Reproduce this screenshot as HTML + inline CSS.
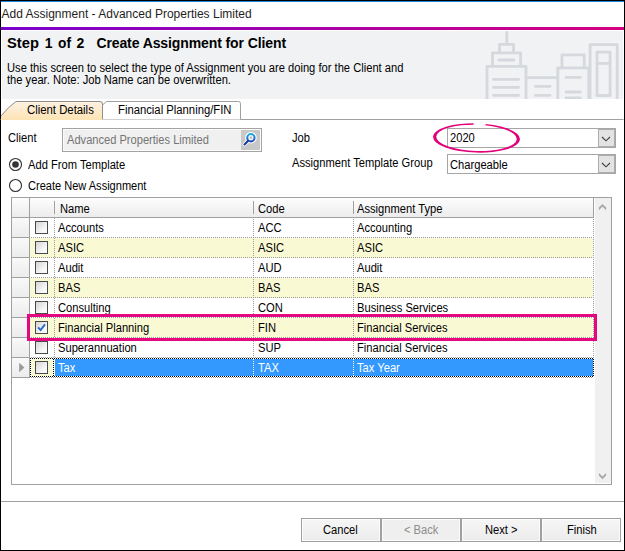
<!DOCTYPE html><html><head><meta charset="utf-8"><style>
*{margin:0;padding:0;box-sizing:border-box}
html,body{width:625px;height:551px;overflow:hidden;background:#fff}
body{position:relative;font-family:"Liberation Sans",sans-serif;color:#000}
body>div{position:absolute}
.t{white-space:nowrap;line-height:13px;font-size:11px}
svg{position:absolute;left:0;top:0}
</style></head><body>
<div style="left:0px;top:0px;width:625px;height:1px;background:#000"></div>
<div style="left:0px;top:0px;width:1px;height:551px;background:#000"></div>
<div style="left:624px;top:0px;width:1px;height:551px;background:#000"></div>
<div style="left:0px;top:550px;width:625px;height:1px;background:#000"></div>
<div style="left:1px;top:1px;width:623px;height:1px;background:#1784d8"></div>
<div class="t" style="left:1.5px;top:8px;font-size:12px;color:#1e1e1e">Add Assignment - Advanced Properties Limited</div>
<div style="left:1px;top:27px;width:623px;height:3px;background:linear-gradient(90deg,#7a00cc 0%,#a800aa 50%,#d6007f 100%)"></div>
<div style="left:2px;top:31px;width:621px;height:68px;background:#f1f2f4"></div>
<div class="t" style="left:6.9px;top:35px;font-size:14px;line-height:16px;font-weight:bold;letter-spacing:0px;transform:scaleX(1.05);transform-origin:0 0">Step</div>
<div class="t" style="left:44.8px;top:35px;font-size:14px;line-height:16px;font-weight:bold;letter-spacing:0px;transform:scaleX(1);transform-origin:0 0">1</div>
<div class="t" style="left:57.5px;top:35px;font-size:14px;line-height:16px;font-weight:bold;letter-spacing:0px;transform:scaleX(0.98);transform-origin:0 0">of</div>
<div class="t" style="left:76.5px;top:35px;font-size:14px;line-height:16px;font-weight:bold;letter-spacing:0px;transform:scaleX(1);transform-origin:0 0">2</div>
<div class="t" style="left:96.4px;top:35px;font-size:14px;line-height:16px;font-weight:bold;letter-spacing:-0.1px;transform:scaleX(1);transform-origin:0 0">Create Assignment for Client</div>
<div class="t" style="left:6.9px;top:61px;font-size:12px;line-height:14px;transform:scaleX(0.93);transform-origin:0 0;">Use this screen to select the type of Assignment you are doing for the Client and</div>
<div class="t" style="left:6.9px;top:73px;font-size:12px;line-height:14px;transform:scaleX(0.93);transform-origin:0 0;">the year. Note: Job Name can be overwritten.</div>
<div style="left:2px;top:31px;width:621px;height:68px;overflow:hidden"><div style="position:absolute;left:-2px;top:-31px"><svg width="625" height="99" viewBox="0 0 625 99" style="left:0;top:0">
<g fill="none" stroke="#d5d8dc" stroke-width="2.8" stroke-linecap="round" stroke-linejoin="round">
<path d="M506.8 32.5V44.3"/>
<path d="M499.5 52.5V44.3H513.6V52.5"/>
<path d="M492.5 65.5V52.8H520.6V65.5"/>
<path d="M498.8 60H514"/>
<path d="M487 100V66.3H526V100"/>
<path d="M493.5 79.3H518.6M493.5 87.3H518.6M493.5 95.3H518.6"/>
<path d="M526 77.7H557.8"/>
<path d="M535.5 86.4H550M535.5 95.3H550"/>
<path d="M557.8 100V67.9H588.8V100"/>
<path d="M561.9 67.9V54.8H584.2V67.9"/>
<path d="M566 77.4H580.3M566 92H580.3M566 98H580.3"/>
<path d="M590.1 100V44.7H617.2V100"/>
<path d="M597 95.5V52.2H610.1V95.5H597M597 63.3H610.1"/>
</g></svg></div></div>
<div style="left:0;top:0;width:625px;height:130px"><svg width="625" height="130" style="left:0;top:0">
<path d="M0.5 119.5H623.5" stroke="#a0a0a0" stroke-width="1" fill="none"/>
<path d="M102.5 119.5V105L106.5 101.5H238.5Q240.5 101.5 240.5 103.5V119.5" fill="#fff" stroke="#a0a0a0" stroke-width="1"/>
<defs><linearGradient id="pg" x1="0" y1="0" x2="0" y2="1"><stop offset="0" stop-color="#fef2e3"/><stop offset="1" stop-color="#fde3b4"/></linearGradient></defs>
<path d="M1 120V116Q8 107 16 101.5H100Q102.5 101.5 102.5 104V120Z" fill="url(#pg)"/>
<path d="M1 116Q8 107 16 101.5H100Q102.5 101.5 102.5 104V119" fill="none" stroke="#8f8f8f" stroke-width="1"/>
</svg></div>
<div class="t" style="left:27.2px;top:103px;font-size:12px;line-height:14px;transform:scaleX(0.945);transform-origin:0 0;">Client Details</div>
<div class="t" style="left:117.9px;top:103px;font-size:12px;line-height:14px;transform:scaleX(0.94);transform-origin:0 0;">Financial Planning/FIN</div>
<div class="t" style="left:8.3px;top:131px;font-size:12px;line-height:14px;transform:scaleX(0.93);transform-origin:0 0;">Client</div>
<div style="left:62px;top:128px;width:200px;height:24px;border:1px solid #a3a3a3;background:#f0f0f0;box-shadow:inset 0 0 0 1px #fcfcfc"></div>
<div class="t" style="left:66.9px;top:133px;font-size:12px;line-height:14px;transform:scaleX(0.925);transform-origin:0 0;color:#747474">Advanced Properties Limited</div>
<div style="left:241px;top:130px;width:19px;height:20px;background:#c8c8c8"></div>
<div style="left:241px;top:130px;width:19px;height:20px"><svg width="19" height="20" viewBox="0 0 19 20" style="left:0;top:0">
<defs><linearGradient id="sg" x1="0" y1="0" x2="0" y2="1"><stop offset="0" stop-color="#1faee6"/><stop offset="1" stop-color="#2046c4"/></linearGradient></defs>
<path d="M3.4 14.5L7.2 10.7" stroke="#fff" stroke-width="3.8" stroke-linecap="round"/>
<circle cx="9.9" cy="7.7" r="3.7" fill="none" stroke="#fff" stroke-width="4.2"/>
<circle cx="9.9" cy="7.7" r="3.65" fill="none" stroke="url(#sg)" stroke-width="2.1"/>
<path d="M3.5 14.4L6.9 11" stroke="#1a3a92" stroke-width="2.1" stroke-linecap="round"/>
</svg></div>
<div class="t" style="left:292.2px;top:131px;font-size:12px;line-height:14px;transform:scaleX(0.93);transform-origin:0 0;">Job</div>
<div class="t" style="left:292.2px;top:156px;font-size:12px;line-height:14px;transform:scaleX(0.93);transform-origin:0 0;">Assignment Template Group</div>
<div style="left:447px;top:128px;width:169px;height:20px;border:1px solid #a6a6a6;background:#fff"></div>
<div style="left:598px;top:129px;width:17px;height:18px;border:1px solid #adadad;background:#e3e3e3"></div>
<svg width="12" height="8" style="left:600px;top:136px"><path d="M2 1L6 4.8L10 1" fill="none" stroke="#404040" stroke-width="1.15"/></svg>
<div class="t" style="left:450px;top:131px;font-size:12px;line-height:14px;transform:scaleX(0.93);transform-origin:0 0;">2020</div>
<div style="left:447px;top:154px;width:169px;height:20px;border:1px solid #a6a6a6;background:#fff"></div>
<div style="left:598px;top:155px;width:17px;height:18px;border:1px solid #adadad;background:#e3e3e3"></div>
<svg width="12" height="8" style="left:600px;top:162px"><path d="M2 1L6 4.8L10 1" fill="none" stroke="#404040" stroke-width="1.15"/></svg>
<div class="t" style="left:450px;top:158px;font-size:12px;line-height:14px;transform:scaleX(0.93);transform-origin:0 0;">Chargeable</div>
<svg width="17" height="17" style="left:7px;top:156px"><circle cx="8.5" cy="8.5" r="6" fill="#fff" stroke="#333" stroke-width="1.1"/><circle cx="8.5" cy="8.5" r="3.3" fill="#333"/></svg>
<svg width="17" height="17" style="left:7px;top:177px"><circle cx="8.5" cy="8.5" r="6" fill="#fff" stroke="#333" stroke-width="1.1"/></svg>
<div class="t" style="left:28.4px;top:158px;font-size:12px;line-height:14px;transform:scaleX(0.93);transform-origin:0 0;">Add From Template</div>
<div class="t" style="left:28.1px;top:179px;font-size:12px;line-height:14px;transform:scaleX(0.92);transform-origin:0 0;">Create New Assignment</div>
<svg width="625" height="200" style="left:0;top:0"><g transform="rotate(1.7 476.5 138)">
<path fill="#e2007c" fill-rule="evenodd" d="M433 138a43.5 14.6 0 1 0 87 0a43.5 14.6 0 1 0 -87 0Z M436.2 137.9a40.3 13.1 0 1 0 80.6 0a40.3 13.1 0 1 0 -80.6 0Z"/>
</g><rect x="473.6" y="120.5" width="12" height="5" fill="#fff"/></svg>
<div style="left:11px;top:197px;width:601px;height:288px;border:1px solid #a0a0a0;background:#fff"></div>
<div style="left:12px;top:198px;width:582px;height:19px;background:linear-gradient(#fdfdfd,#ececec)"></div>
<div style="left:12px;top:217px;width:582px;height:1px;background:#a0a0a0"></div>
<div style="left:29px;top:198px;width:1px;height:20px;background:#a0a0a0"></div>
<div style="left:593px;top:198px;width:1px;height:20px;background:#a0a0a0"></div>
<div style="left:54px;top:201px;width:1px;height:13px;background:#a0a0a0"></div>
<div style="left:253px;top:201px;width:1px;height:13px;background:#a0a0a0"></div>
<div style="left:353px;top:201px;width:1px;height:13px;background:#a0a0a0"></div>
<div class="t" style="left:59.5px;top:202px;font-size:12px;line-height:14px;transform:scaleX(0.93);transform-origin:0 0;">Name</div>
<div class="t" style="left:258px;top:202px;font-size:12px;line-height:14px;transform:scaleX(0.93);transform-origin:0 0;">Code</div>
<div class="t" style="left:357.4px;top:202px;font-size:12px;line-height:14px;transform:scaleX(0.93);transform-origin:0 0;">Assignment Type</div>
<div style="left:595px;top:198px;width:16px;height:285px;background:#f0f0f0"></div>
<svg width="12" height="10" style="left:597px;top:201px"><path d="M1.9 6.6L5.5 3L9.1 6.6L9.1 9.2L5.5 5.6L1.9 9.2Z" fill="#a6a6a6" stroke="none"/></svg>
<svg width="12" height="10" style="left:597px;top:471px"><path d="M1.9 2L5.5 5.6L9.1 2L9.1 4.6L5.5 8.2L1.9 4.6Z" fill="#a6a6a6" stroke="none"/></svg>
<div style="left:12px;top:218px;width:17px;height:19px;background:linear-gradient(#f9f9f9,#ececec)"></div>
<div style="left:12px;top:237px;width:18px;height:1px;background:#a0a0a0"></div>
<div style="left:29px;top:218px;width:1px;height:20px;background:#a0a0a0"></div>
<div style="left:30px;top:218px;width:563px;height:20px;background:#ffffff"></div>
<div style="left:31px;top:237px;width:562px;height:1px;background:repeating-linear-gradient(90deg,#9a9a9a 0 1px,transparent 1px 2px)"></div>
<div style="left:54px;top:218px;width:1px;height:20px;background:repeating-linear-gradient(180deg,#9a9a9a 0 1px,transparent 1px 2px)"></div>
<div style="left:253px;top:219px;width:1px;height:19px;background:repeating-linear-gradient(180deg,#9a9a9a 0 1px,transparent 1px 2px)"></div>
<div style="left:353px;top:219px;width:1px;height:19px;background:repeating-linear-gradient(180deg,#9a9a9a 0 1px,transparent 1px 2px)"></div>
<div style="left:593px;top:219px;width:1px;height:19px;background:repeating-linear-gradient(180deg,#9a9a9a 0 1px,transparent 1px 2px)"></div>
<div style="left:35px;top:221px;width:13px;height:13px;border:1px solid #4a4a4a;background:linear-gradient(135deg,#d4d4d4,#f8f8f8 70%)"></div>
<div class="t" style="left:58.4px;top:221px;font-size:12px;line-height:14px;transform:scaleX(0.93);transform-origin:0 0;color:#000">Accounts</div>
<div class="t" style="left:257.5px;top:221px;font-size:12px;line-height:14px;transform:scaleX(0.93);transform-origin:0 0;color:#000">ACC</div>
<div class="t" style="left:357.4px;top:221px;font-size:12px;line-height:14px;transform:scaleX(0.93);transform-origin:0 0;color:#000">Accounting</div>
<div style="left:12px;top:238px;width:17px;height:19px;background:linear-gradient(#f9f9f9,#ececec)"></div>
<div style="left:12px;top:257px;width:18px;height:1px;background:#a0a0a0"></div>
<div style="left:29px;top:238px;width:1px;height:20px;background:#a0a0a0"></div>
<div style="left:30px;top:238px;width:563px;height:20px;background:#f9f9d4"></div>
<div style="left:31px;top:257px;width:562px;height:1px;background:repeating-linear-gradient(90deg,#9a9a9a 0 1px,transparent 1px 2px)"></div>
<div style="left:54px;top:238px;width:1px;height:20px;background:repeating-linear-gradient(180deg,#9a9a9a 0 1px,transparent 1px 2px)"></div>
<div style="left:253px;top:239px;width:1px;height:19px;background:repeating-linear-gradient(180deg,#9a9a9a 0 1px,transparent 1px 2px)"></div>
<div style="left:353px;top:239px;width:1px;height:19px;background:repeating-linear-gradient(180deg,#9a9a9a 0 1px,transparent 1px 2px)"></div>
<div style="left:593px;top:239px;width:1px;height:19px;background:repeating-linear-gradient(180deg,#9a9a9a 0 1px,transparent 1px 2px)"></div>
<div style="left:35px;top:241px;width:13px;height:13px;border:1px solid #4a4a4a;background:linear-gradient(135deg,#d4d4d4,#f8f8f8 70%)"></div>
<div class="t" style="left:58.4px;top:241px;font-size:12px;line-height:14px;transform:scaleX(0.93);transform-origin:0 0;color:#000">ASIC</div>
<div class="t" style="left:257.5px;top:241px;font-size:12px;line-height:14px;transform:scaleX(0.93);transform-origin:0 0;color:#000">ASIC</div>
<div class="t" style="left:357.4px;top:241px;font-size:12px;line-height:14px;transform:scaleX(0.93);transform-origin:0 0;color:#000">ASIC</div>
<div style="left:12px;top:258px;width:17px;height:19px;background:linear-gradient(#f9f9f9,#ececec)"></div>
<div style="left:12px;top:277px;width:18px;height:1px;background:#a0a0a0"></div>
<div style="left:29px;top:258px;width:1px;height:20px;background:#a0a0a0"></div>
<div style="left:30px;top:258px;width:563px;height:20px;background:#ffffff"></div>
<div style="left:31px;top:277px;width:562px;height:1px;background:repeating-linear-gradient(90deg,#9a9a9a 0 1px,transparent 1px 2px)"></div>
<div style="left:54px;top:258px;width:1px;height:20px;background:repeating-linear-gradient(180deg,#9a9a9a 0 1px,transparent 1px 2px)"></div>
<div style="left:253px;top:259px;width:1px;height:19px;background:repeating-linear-gradient(180deg,#9a9a9a 0 1px,transparent 1px 2px)"></div>
<div style="left:353px;top:259px;width:1px;height:19px;background:repeating-linear-gradient(180deg,#9a9a9a 0 1px,transparent 1px 2px)"></div>
<div style="left:593px;top:259px;width:1px;height:19px;background:repeating-linear-gradient(180deg,#9a9a9a 0 1px,transparent 1px 2px)"></div>
<div style="left:35px;top:261px;width:13px;height:13px;border:1px solid #4a4a4a;background:linear-gradient(135deg,#d4d4d4,#f8f8f8 70%)"></div>
<div class="t" style="left:58.4px;top:261px;font-size:12px;line-height:14px;transform:scaleX(0.93);transform-origin:0 0;color:#000">Audit</div>
<div class="t" style="left:257.5px;top:261px;font-size:12px;line-height:14px;transform:scaleX(0.93);transform-origin:0 0;color:#000">AUD</div>
<div class="t" style="left:357.4px;top:261px;font-size:12px;line-height:14px;transform:scaleX(0.93);transform-origin:0 0;color:#000">Audit</div>
<div style="left:12px;top:278px;width:17px;height:19px;background:linear-gradient(#f9f9f9,#ececec)"></div>
<div style="left:12px;top:297px;width:18px;height:1px;background:#a0a0a0"></div>
<div style="left:29px;top:278px;width:1px;height:20px;background:#a0a0a0"></div>
<div style="left:30px;top:278px;width:563px;height:20px;background:#f9f9d4"></div>
<div style="left:31px;top:297px;width:562px;height:1px;background:repeating-linear-gradient(90deg,#9a9a9a 0 1px,transparent 1px 2px)"></div>
<div style="left:54px;top:278px;width:1px;height:20px;background:repeating-linear-gradient(180deg,#9a9a9a 0 1px,transparent 1px 2px)"></div>
<div style="left:253px;top:279px;width:1px;height:19px;background:repeating-linear-gradient(180deg,#9a9a9a 0 1px,transparent 1px 2px)"></div>
<div style="left:353px;top:279px;width:1px;height:19px;background:repeating-linear-gradient(180deg,#9a9a9a 0 1px,transparent 1px 2px)"></div>
<div style="left:593px;top:279px;width:1px;height:19px;background:repeating-linear-gradient(180deg,#9a9a9a 0 1px,transparent 1px 2px)"></div>
<div style="left:35px;top:281px;width:13px;height:13px;border:1px solid #4a4a4a;background:linear-gradient(135deg,#d4d4d4,#f8f8f8 70%)"></div>
<div class="t" style="left:58.4px;top:281px;font-size:12px;line-height:14px;transform:scaleX(0.93);transform-origin:0 0;color:#000">BAS</div>
<div class="t" style="left:257.5px;top:281px;font-size:12px;line-height:14px;transform:scaleX(0.93);transform-origin:0 0;color:#000">BAS</div>
<div class="t" style="left:357.4px;top:281px;font-size:12px;line-height:14px;transform:scaleX(0.93);transform-origin:0 0;color:#000">BAS</div>
<div style="left:12px;top:298px;width:17px;height:19px;background:linear-gradient(#f9f9f9,#ececec)"></div>
<div style="left:12px;top:317px;width:18px;height:1px;background:#a0a0a0"></div>
<div style="left:29px;top:298px;width:1px;height:20px;background:#a0a0a0"></div>
<div style="left:30px;top:298px;width:563px;height:20px;background:#ffffff"></div>
<div style="left:31px;top:317px;width:562px;height:1px;background:repeating-linear-gradient(90deg,#9a9a9a 0 1px,transparent 1px 2px)"></div>
<div style="left:54px;top:298px;width:1px;height:20px;background:repeating-linear-gradient(180deg,#9a9a9a 0 1px,transparent 1px 2px)"></div>
<div style="left:253px;top:299px;width:1px;height:19px;background:repeating-linear-gradient(180deg,#9a9a9a 0 1px,transparent 1px 2px)"></div>
<div style="left:353px;top:299px;width:1px;height:19px;background:repeating-linear-gradient(180deg,#9a9a9a 0 1px,transparent 1px 2px)"></div>
<div style="left:593px;top:299px;width:1px;height:19px;background:repeating-linear-gradient(180deg,#9a9a9a 0 1px,transparent 1px 2px)"></div>
<div style="left:35px;top:301px;width:13px;height:13px;border:1px solid #4a4a4a;background:linear-gradient(135deg,#d4d4d4,#f8f8f8 70%)"></div>
<div class="t" style="left:58.4px;top:301px;font-size:12px;line-height:14px;transform:scaleX(0.93);transform-origin:0 0;color:#000">Consulting</div>
<div class="t" style="left:257.5px;top:301px;font-size:12px;line-height:14px;transform:scaleX(0.93);transform-origin:0 0;color:#000">CON</div>
<div class="t" style="left:357.4px;top:301px;font-size:12px;line-height:14px;transform:scaleX(0.93);transform-origin:0 0;color:#000">Business Services</div>
<div style="left:12px;top:318px;width:17px;height:19px;background:linear-gradient(#f9f9f9,#ececec)"></div>
<div style="left:12px;top:337px;width:18px;height:1px;background:#a0a0a0"></div>
<div style="left:29px;top:318px;width:1px;height:20px;background:#a0a0a0"></div>
<div style="left:30px;top:318px;width:563px;height:20px;background:#f9f9d4"></div>
<div style="left:31px;top:337px;width:562px;height:1px;background:repeating-linear-gradient(90deg,#9a9a9a 0 1px,transparent 1px 2px)"></div>
<div style="left:54px;top:318px;width:1px;height:20px;background:repeating-linear-gradient(180deg,#9a9a9a 0 1px,transparent 1px 2px)"></div>
<div style="left:253px;top:319px;width:1px;height:19px;background:repeating-linear-gradient(180deg,#9a9a9a 0 1px,transparent 1px 2px)"></div>
<div style="left:353px;top:319px;width:1px;height:19px;background:repeating-linear-gradient(180deg,#9a9a9a 0 1px,transparent 1px 2px)"></div>
<div style="left:593px;top:319px;width:1px;height:19px;background:repeating-linear-gradient(180deg,#9a9a9a 0 1px,transparent 1px 2px)"></div>
<div style="left:35px;top:321px;width:13px;height:13px;border:1px solid #4a4a4a;background:linear-gradient(135deg,#d4d4d4,#f8f8f8 70%)"></div>
<div class="t" style="left:58.4px;top:321px;font-size:12px;line-height:14px;transform:scaleX(0.93);transform-origin:0 0;color:#000">Financial Planning</div>
<div class="t" style="left:257.5px;top:321px;font-size:12px;line-height:14px;transform:scaleX(0.93);transform-origin:0 0;color:#000">FIN</div>
<div class="t" style="left:357.4px;top:321px;font-size:12px;line-height:14px;transform:scaleX(0.93);transform-origin:0 0;color:#000">Financial Services</div>
<div style="left:12px;top:338px;width:17px;height:19px;background:linear-gradient(#f9f9f9,#ececec)"></div>
<div style="left:12px;top:357px;width:18px;height:1px;background:#a0a0a0"></div>
<div style="left:29px;top:338px;width:1px;height:20px;background:#a0a0a0"></div>
<div style="left:30px;top:338px;width:563px;height:20px;background:#ffffff"></div>
<div style="left:31px;top:357px;width:562px;height:1px;background:repeating-linear-gradient(90deg,#9a9a9a 0 1px,transparent 1px 2px)"></div>
<div style="left:54px;top:338px;width:1px;height:20px;background:repeating-linear-gradient(180deg,#9a9a9a 0 1px,transparent 1px 2px)"></div>
<div style="left:253px;top:339px;width:1px;height:19px;background:repeating-linear-gradient(180deg,#9a9a9a 0 1px,transparent 1px 2px)"></div>
<div style="left:353px;top:339px;width:1px;height:19px;background:repeating-linear-gradient(180deg,#9a9a9a 0 1px,transparent 1px 2px)"></div>
<div style="left:593px;top:339px;width:1px;height:19px;background:repeating-linear-gradient(180deg,#9a9a9a 0 1px,transparent 1px 2px)"></div>
<div style="left:35px;top:341px;width:13px;height:13px;border:1px solid #4a4a4a;background:linear-gradient(135deg,#d4d4d4,#f8f8f8 70%)"></div>
<div class="t" style="left:58.4px;top:341px;font-size:12px;line-height:14px;transform:scaleX(0.93);transform-origin:0 0;color:#000">Superannuation</div>
<div class="t" style="left:257.5px;top:341px;font-size:12px;line-height:14px;transform:scaleX(0.93);transform-origin:0 0;color:#000">SUP</div>
<div class="t" style="left:357.4px;top:341px;font-size:12px;line-height:14px;transform:scaleX(0.93);transform-origin:0 0;color:#000">Financial Services</div>
<div style="left:12px;top:358px;width:17px;height:19px;background:linear-gradient(#f9f9f9,#ececec)"></div>
<div style="left:12px;top:377px;width:18px;height:1px;background:#a0a0a0"></div>
<div style="left:29px;top:358px;width:1px;height:20px;background:#a0a0a0"></div>
<div style="left:30px;top:358px;width:564px;height:20px;background:#fff"></div>
<div style="left:31px;top:359px;width:22px;height:17px;background:#f9f9d4"></div>
<div style="left:55px;top:359px;width:538px;height:17px;background:#3399ff"></div>
<div style="left:30px;top:358px;width:564px;height:1px;background:repeating-linear-gradient(90deg,#000 0 1px,#fff 1px 2px)"></div>
<div style="left:30px;top:376px;width:564px;height:1px;background:repeating-linear-gradient(90deg,#000 0 1px,#fff 1px 2px)"></div>
<div style="left:30px;top:358px;width:1px;height:19px;background:repeating-linear-gradient(180deg,#000 0 1px,#fff 1px 2px)"></div>
<div style="left:53px;top:358px;width:1px;height:19px;background:repeating-linear-gradient(180deg,#fff 0 1px,#000 1px 2px)"></div>
<div style="left:593px;top:358px;width:1px;height:19px;background:repeating-linear-gradient(180deg,#fff 0 1px,#000 1px 2px)"></div>
<div style="left:253px;top:359px;width:1px;height:17px;background:repeating-linear-gradient(180deg,#fff 0 1px,transparent 1px 2px)"></div>
<div style="left:353px;top:359px;width:1px;height:17px;background:repeating-linear-gradient(180deg,#fff 0 1px,transparent 1px 2px)"></div>
<div style="left:31px;top:377px;width:562px;height:1px;background:repeating-linear-gradient(90deg,#9a9a9a 0 1px,transparent 1px 2px)"></div>
<div style="left:35px;top:361px;width:13px;height:13px;border:1px solid #4a4a4a;background:linear-gradient(135deg,#d4d4d4,#f8f8f8 70%)"></div>
<div class="t" style="left:58.4px;top:361px;font-size:12px;line-height:14px;transform:scaleX(0.93);transform-origin:0 0;color:#fff">Tax</div>
<div class="t" style="left:257.5px;top:361px;font-size:12px;line-height:14px;transform:scaleX(0.93);transform-origin:0 0;color:#fff">TAX</div>
<div class="t" style="left:357.4px;top:361px;font-size:12px;line-height:14px;transform:scaleX(0.93);transform-origin:0 0;color:#fff">Tax Year</div>
<svg width="13" height="13" style="left:35px;top:321px"><path d="M3.1 6.3L5.6 9L10 3.4" fill="none" stroke="#2266cc" stroke-width="1.8"/></svg>
<svg width="8" height="12" style="left:18px;top:362px"><path d="M1.2 0.8L6.4 5.5L1.2 10.2Z" fill="#9a9a9a"/></svg>
<div style="left:27px;top:314px;width:570px;height:27px;border:3px solid #e5077f"></div>
<div style="left:1px;top:501px;width:623px;height:1px;background:#a0a0a0"></div>
<div style="left:301px;top:518px;width:80px;height:24px;border:1px solid #a0a0a0;background:linear-gradient(#f6f6f6,#ebebeb);box-shadow:inset 0 0 0 1px #fbfbfb"></div>
<div class="t" style="left:323.1px;top:523px;font-size:12px;line-height:14px;transform:scaleX(0.93);transform-origin:0 0;">Cancel</div>
<div style="left:381px;top:518px;width:80px;height:24px;border:1px solid #a0a0a0;background:#efefef;box-shadow:inset 0 0 0 1px #fbfbfb"></div>
<div class="t" style="left:404.4px;top:523px;font-size:12px;line-height:14px;transform:scaleX(0.93);transform-origin:0 0;color:#8d8d8d">&lt; Back</div>
<div style="left:461px;top:518px;width:80px;height:24px;border:1px solid #a0a0a0;background:linear-gradient(#f6f6f6,#ebebeb);box-shadow:inset 0 0 0 1px #fbfbfb"></div>
<div class="t" style="left:484.9px;top:523px;font-size:12px;line-height:14px;transform:scaleX(0.93);transform-origin:0 0;">Next &gt;</div>
<div style="left:541px;top:518px;width:80px;height:24px;border:1px solid #a0a0a0;background:linear-gradient(#f6f6f6,#ebebeb);box-shadow:inset 0 0 0 1px #fbfbfb"></div>
<div class="t" style="left:566.9px;top:523px;font-size:12px;line-height:14px;transform:scaleX(0.93);transform-origin:0 0;">Finish</div>
</body></html>
